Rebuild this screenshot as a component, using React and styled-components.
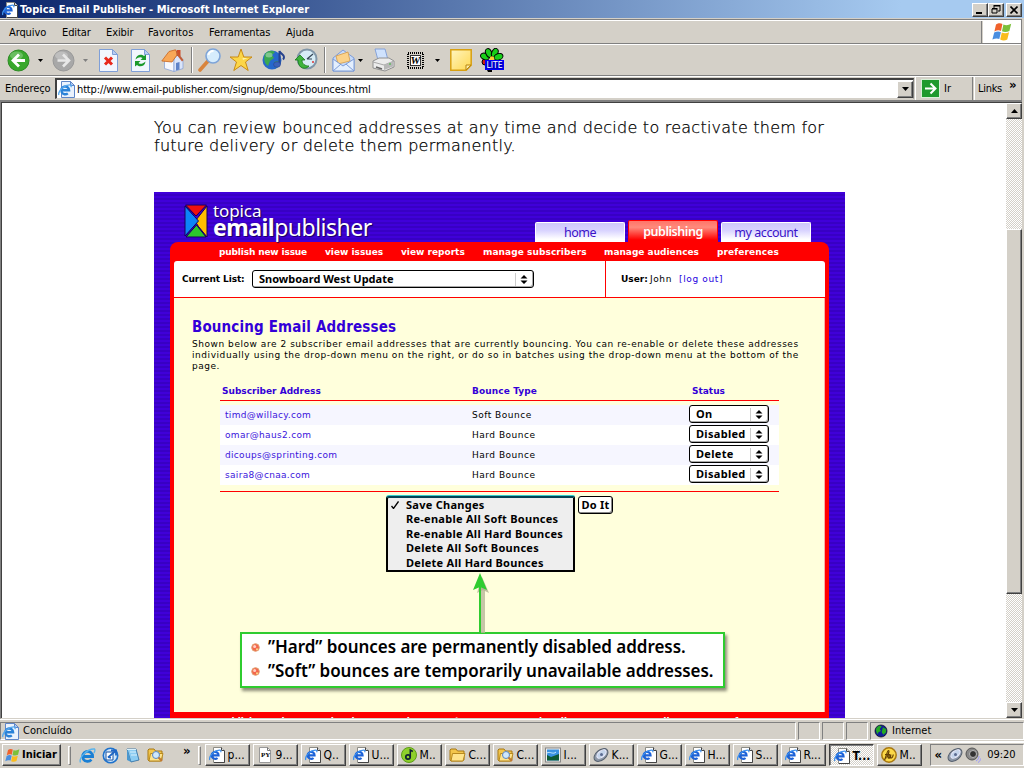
import React from "react";
import styled, { createGlobalStyle, css } from "styled-components";

const FACE = "#d4d0c8";
const tahoma = `"DejaVu Sans Condensed", "DejaVu Sans", sans-serif`;
const verdana = `"DejaVu Sans", sans-serif`;
const humanist = `"Noto Sans", "Open Sans", sans-serif`;

const Global = createGlobalStyle`
  * { box-sizing: border-box; }
  body { margin: 0; background: ${FACE}; overflow: hidden; }
  svg { display: block; flex: none; }
`;

const raised = css`
  border: 1px solid;
  border-color: #fff #404040 #404040 #fff;
  box-shadow: inset -1px -1px 0 #808080;
  background: ${FACE};
`;

const Screen = styled.div`
  width: 1024px;
  height: 768px;
  display: flex;
  flex-direction: column;
  background: ${FACE};
  font: 11px/14px ${tahoma};
  color: #000;
  white-space: nowrap;
  overflow: hidden;
`;

const Label = styled.span`
  flex: none;
  display: block;
  white-space: nowrap;
  letter-spacing: ${(p) => p.$ls || 0}px;
  width: ${(p) => (p.$w ? p.$w + "px" : "auto")};
`;

/* ---------- window chrome ---------- */
const TitleBar = styled.header`
  height: 18px;
  flex: none;
  display: flex;
  align-items: center;
  padding: 1px 2px 0 2px;
  gap: 2px;
  background: linear-gradient(90deg, #0a246a, #a6caf0 88%);
  color: #fff;
  font-weight: bold;
`;
const Spacer = styled.div`
  flex: 1;
`;
const WinButton = styled.span`
  ${raised}
  width: 16px;
  height: 14px;
  margin-left: ${(p) => p.$gap || 0}px;
  display: flex;
  align-items: center;
  justify-content: center;
`;
const WinButtons = styled.div`
  display: flex;
`;
const Bars = styled.div`
  flex: none;
  height: 83px;
  margin-right: 2px;
  margin-top: 1px;
  border-top: 1px solid #808080;
  border-right: 1px solid #808080;
`;
const MenuBar = styled.nav`
  height: 24px;
  display: flex;
  border-top: 1px solid #fff;
  border-bottom: 1px solid #808080;
`;
const MenuItem = styled.span`
  width: ${(p) => p.$w}px;
  line-height: 23px;
  letter-spacing: ${(p) => p.$ls || 0}px;
`;
const MenuItems = styled.div`
  flex: 1;
  display: flex;
  padding-left: 9px;
  border-right: 1px solid #808080;
`;
const FlagBox = styled.div`
  width: 38px;
  margin-left: 1px;
  background: #fff;
  display: flex;
  align-items: center;
  justify-content: center;
`;
const ToolBar = styled.div`
  height: 32px;
  display: flex;
  align-items: center;
  border-top: 1px solid #fff;
  border-bottom: 1px solid #808080;
  padding-left: 7px;
`;
const Tool = styled.span`
  margin-left: ${(p) => p.$m || 0}px;
`;
const ToolSep = styled.span`
  width: 2px;
  height: 26px;
  margin-left: ${(p) => p.$m}px;
  border-left: 1px solid #808080;
  border-right: 1px solid #fff;
`;
const AddressBar = styled.div`
  height: 25px;
  display: flex;
  align-items: stretch;
  border-top: 1px solid #fff;
  border-bottom: 1px solid #808080;
  padding-left: 5px;
  line-height: 23px;
`;
const AddressField = styled.div`
  width: 859px;
  height: 21px;
  margin-top: 1px;
  display: flex;
  align-items: center;
  background: #fff;
  border: 1px solid;
  border-width: 2px 1px 1px 2px;
  border-color: #404040 #808080 #d4d0c8 #404040;
  padding-left: 1px;
`;
const DropButton = styled.span`
  ${raised}
  width: 16px;
  height: 17px;
  display: flex;
  align-items: center;
  justify-content: center;
`;
const GoGroup = styled.div`
  display: flex;
  align-items: center;
  width: 58px;
  margin-left: 1px;
  padding-left: 5px;
  gap: 4px;
  border-left: 1px solid #fff;
  border-right: 1px solid #808080;
`;
const LinksGroup = styled.div`
  display: flex;
  flex: 1;
  margin-left: 1px;
  padding-left: 3px;
  border-left: 1px solid #fff;
`;
const Chevron = styled.span`
  font-weight: bold;
  font-size: 13px;
  line-height: ${(p) => p.$lh || 14}px;
`;

/* ---------- viewport ---------- */
const Viewport = styled.main`
  flex: none;
  height: 618px;
  margin: -1px 2px 0 0;
  display: flex;
  border-top: 1px solid #808080;
  border-left: 1px solid #808080;
  border-bottom: 1px solid ${FACE};
  background: #fff;
`;
const Page = styled.div`
  flex: 1;
  overflow: hidden;
  padding: 16px 0 0 152px;
  border-top: 1px solid #404040;
  border-left: 1px solid #404040;
`;
const Intro = styled.p`
  margin: 0 0 37px;
  height: 36px;
  font: 200 16px/18px ${verdana};
  -webkit-text-stroke: 0.25px #000;
  letter-spacing: 0.245px;
`;
const ScrollBar = styled.div`
  width: 16px;
  display: flex;
  flex-direction: column;
  border-top: 1px solid #404040;
  background: repeating-conic-gradient(#fff 0 25%, ${FACE} 0 50%) 0 0 / 2px 2px;
`;
const ScrollButton = styled.div`
  ${raised}
  height: 16px;
  display: flex;
  align-items: center;
  justify-content: center;
`;
const Thumb = styled.div`
  ${raised}
  height: 365px;
  margin: 110px 0 108px;
`;

/* ---------- publisher screen ---------- */
const Publisher = styled.section`
  width: 691px;
  height: 540px;
  padding: 0 16px;
  background: repeating-linear-gradient(#4000d9 0 2px, #3800c4 2px 4px);
`;
const Header = styled.div`
  height: 50px;
  display: flex;
  padding-left: 14px;
`;
const Brand = styled.div`
  width: 351px;
  display: flex;
  gap: 5px;
  padding-top: 12px;
  color: #fff;
  font-family: ${humanist};
  text-shadow: 1px 1px 1px #14005c;
`;
const BrandTop = styled.div`
  font-size: 17px;
  line-height: 14px;
  letter-spacing: -0.1px;
`;
const BrandBottom = styled.div`
  font-size: 23px;
  line-height: 18px;
  letter-spacing: -0.5px;
`;
const Tabs = styled.div`
  display: flex;
  align-items: flex-end;
  gap: 3px;
`;
const Tab = styled.span`
  width: 90px;
  height: ${(p) => (p.$on ? 22 : 20)}px;
  border-radius: 2px 2px 0 0;
  text-align: center;
  font: ${(p) => (p.$on ? 600 : 400)} 12.5px/${(p) => (p.$on ? 22 : 19)}px ${humanist};
  letter-spacing: -0.45px;
  color: ${(p) => (p.$on ? "#fff" : "#3a12c8")};
  border: ${(p) => (p.$on ? "1px solid #f00" : "1px solid #fff")};
  border-bottom: 0;
  background: ${(p) =>
    p.$on
      ? "linear-gradient(#ff7468, #ff8a7c 30%, #f00 90%)"
      : "linear-gradient(#cfc8fb, #d9d4ff 40%, #fff 85%)"};
`;
const Red = styled.div`
  height: 490px;
  width: 659px;
  background: #f00;
  border-radius: 8px 8px 0 0;
  padding: 0 4px;
`;
const SubNav = styled.nav`
  display: flex;
  height: 19px;
  padding-left: 45px;
  font: bold 9px/21px ${verdana};
  color: #fff;
`;
const SubItem = styled.span`
  width: ${(p) => p.$w}px;
  letter-spacing: ${(p) => p.$ls || 0}px;
`;
const ListBar = styled.div`
  height: 37px;
  display: flex;
  background: #fff;
  border-bottom: 1px solid #f00;
  border-radius: 3px 3px 0 0;
  font: 9px/37px ${verdana};
`;
const ListPart = styled.div`
  width: 432px;
  display: flex;
  align-items: center;
  padding-left: 8px;
  border-right: 1px solid #f00;
  font-weight: bold;
`;
const UserPart = styled.div`
  flex: 1;
  padding-left: 15px;
  display: flex;
`;
const Link = styled.span`
  color: #2400e0;
  letter-spacing: 0.65px;
`;
const Select = styled.span`
  width: ${(p) => p.$w}px;
  height: 18px;
  display: flex;
  align-items: center;
  justify-content: space-between;
  padding: 0 5px 0 6px;
  border: 1px solid #000;
  border-radius: 3px;
  box-shadow: inset -1px -1px 0 #aaa;
  background: #fff;
  font: 700 11px/14px ${humanist};
  letter-spacing: ${(p) => p.$ls || 0}px;
  color: #000;
`;
const Knob = styled.span`
  border-left: 1px solid #ccc;
  height: 13px;
  padding: 2px 0 0 4px;
`;
const Sheet = styled.div`
  height: 414px;
  background: #ffffdc;
  border-right: 1px solid #ffb0a0;
  padding: 20px 0 0 18px;
`;
const Title = styled.h1`
  margin: 0;
  font: bold 15px/18px ${tahoma};
  letter-spacing: 0.15px;
  color: #3300d8;
`;
const Desc = styled.p`
  margin: 3px 0 0;
  height: 33px;
  font: 9px/11px ${verdana};
`;
const Table = styled.div`
  width: 559px;
  margin: 12px 0 0 28px;
  font: 9px/20px ${verdana};
`;
const HeadRow = styled.div`
  display: flex;
  height: 17px;
  line-height: 13px;
  padding: 1px 0 0 2px;
  border-bottom: 1px solid #f00;
  margin-bottom: 4px;
  color: #3300d8;
  font-weight: bold;
`;
const Row = styled.div`
  display: flex;
  height: 20px;
  padding-left: 5px;
  background: ${(p) => (p.$alt ? "#f6f6ff" : "#fff")};
`;
const Cell = styled.span`
  width: ${(p) => p.$w}px;
  letter-spacing: ${(p) => p.$ls || 0}px;
  color: ${(p) => (p.$link ? "#3a14dc" : "inherit")};
`;
const Rule = styled.div`
  height: 1px;
  margin-top: 6px;
  background: #f00;
`;
const BatchRow = styled.div`
  display: flex;
  align-items: flex-start;
  padding: 4px 0 0 194px;
  gap: 3px;
`;
const Menu = styled.div`
  width: 189px;
  height: 76px;
  padding: 0 0 0 3px;
  border: 2px solid #000;
  border-top-color: #045;
  border-radius: 3px 2px 1px 1px;
  box-shadow: 0 -1px 0 #3cc;
  background: #eee;
  font: 700 11px/14.4px ${humanist};
`;
const MenuLine = styled.div`
  display: flex;
  align-items: center;
  height: 14.4px;
  letter-spacing: 0.27px;
`;
const Mark = styled.span`
  width: 15px;
`;
const DoIt = styled.span`
  width: 35px;
  height: 18px;
  border: 1px solid #000;
  border-radius: 3px;
  box-shadow: inset -1px -1px 0 #888;
  background: #fff;
  text-align: center;
  font: 700 11px/16px ${humanist};
  letter-spacing: 0.2px;
`;
const ArrowWrap = styled.div`
  padding-left: 280px;
  margin-top: 1px;
  height: 59px;
`;
const Callout = styled.div`
  width: 485px;
  height: 56px;
  margin-left: 48px;
  padding: 1px 0 0 9px;
  background: #fff;
  border: 2px solid #2fcc2f;
  box-shadow: 2px 3px 3px #8c8c78;
  font: 600 17px/24px ${humanist};
`;
const Point = styled.div`
  display: flex;
  align-items: center;
  gap: 8px;
  height: 24px;
  letter-spacing: -0.04px;
`;
const Footer = styled.div`
  margin-top: -1px;
`;

/* ---------- status and task bars ---------- */
const StatusBar = styled.div`
  flex: none;
  height: 23px;
  border-top: 1px solid #fff;
  border-bottom: 1px solid #fff;
  padding: 2px 0 1px;
  display: flex;
  gap: 2px;
`;
const StatusPane = styled.div`
  width: ${(p) => p.$w}px;
  display: flex;
  align-items: center;
  gap: 4px;
  padding-left: ${(p) => p.$pl || 0}px;
  border: 1px solid;
  border-color: #808080 #fff #fff #808080;
`;
const TaskBar = styled.footer`
  flex: 1;
  border-top: 1px solid #fff;
  display: flex;
  padding: 1px 0 0 2px;
`;
const Start = styled.span`
  ${raised}
  width: 59px;
  height: 22px;
  display: flex;
  align-items: center;
  padding-left: 2px;
  gap: 2px;
  font-weight: bold;
`;
const Grip = styled.span`
  width: 3px;
  height: 19px;
  margin: 2px 0 0 ${(p) => p.$m}px;
  border: 1px solid;
  border-color: #fff #808080 #808080 #fff;
`;
const Quick = styled.div`
  display: flex;
  align-items: center;
  height: 22px;
  gap: 6px;
  width: 112px;
  padding-left: 8px;
`;
const Tasks = styled.div`
  display: flex;
  gap: 3px;
  margin-left: 4px;
`;
const Task = styled.span`
  ${raised}
  width: 45px;
  height: 22px;
  display: flex;
  align-items: center;
  gap: 3px;
  padding-left: 3px;
  font-size: 12px;
  ${(p) =>
    p.$on &&
    css`
      font-weight: bold;
      border-color: #404040 #fff #fff #404040;
      box-shadow: inset 1px 1px 0 #808080;
      background: repeating-conic-gradient(#fff 0 25%, ${FACE} 0 50%) 0 0 / 2px 2px;
      padding-top: 1px;
      padding-left: 4px;
    `}
`;
const Tray = styled.div`
  width: 94px;
  height: 22px;
  margin-left: 8px;
  display: flex;
  align-items: center;
  padding-left: 4px;
  border: 1px solid;
  border-color: #808080 #fff #fff #808080;
`;

/* ---------- icons ---------- */
const Svg = ({ s = 16, w, h, children }) => (
  <svg width={w || s} height={h || s} viewBox={`0 0 ${w || s} ${h || s}`}>
    {children}
  </svg>
);
const Tri = ({ up, c = "#000", small }) => (
  <svg width={small ? 5 : 7} height={small ? 3 : 4} viewBox="0 0 7 4">
    <path d={up ? "M0 4L3.5 0 7 4z" : "M0 0h7L3.5 4z"} fill={c} />
  </svg>
);
const IePage = () => (
  <Svg>
    <path d="M4.5.5h8l3 3v12h-11z" fill="#fff" stroke="#8d8d86" />
    <path d="M12.5.5v3h3" fill="#ddd" stroke="#444" />
    <path d="M15.5 4v11.5H5" fill="none" stroke="#444" />
    <path d="M2.6 8.400h7a3.500 3.500 0 1 0-1.100 2.500" fill="none" stroke="#1c62d8" strokeWidth="2.100" />
    <path d="M.8 13C-.6 9 6 2.500 11.600 3.300c.6.600.3 1.400 0 2" fill="none" stroke="#3c90ee" strokeWidth="1.200" />
  </Svg>
);
const IePageSmooth = () => (
  <Svg s={17}>
    <path d="M3.500.5h9l4 4v12h-13z" fill="#eaf2fd" stroke="#5f86c8" />
    <path d="M12.500.5v4h4z" fill="#b9cdf2" stroke="#5f86c8" />
    <path d="M3.500 9.300h7.600a3.900 3.900 0 1 0-1.300 3" fill="none" stroke="#2a82d8" strokeWidth="2.400" />
    <path d="M.9 14C-.4 10 7 3 13 4c.6.800.2 1.600-.2 2.200" fill="none" stroke="#56a8ee" strokeWidth="1.300" />
  </Svg>
);
const IeLogo = () => (
  <Svg s={17}>
    <path d="M4 9.5h9.6a5 5 0 1 0-1.200 3.200" fill="none" stroke="#1a7fd4" strokeWidth="2.800" />
    <path d="M1.500 15.500C-.5 11 8 1.500 15.500 2c1 1 0 3-.5 4" fill="none" stroke="#58b4ee" strokeWidth="1.400" />
  </Svg>
);
const Flag = ({ s = 20 }) => (
  <svg width={s} height={s} viewBox="0 0 20 20">
    <path d="M4 2.500C6.500 .8 8.500 1 10.400 2L9 9C7 8 5 8.200 2.400 9.500z" fill="#f0622c" />
    <path d="M11.400 2.500C14 3.700 16.500 3.300 19.200 1.800L17.400 9C15 10.200 12.500 10.400 10 9.300z" fill="#7cc03a" />
    <path d="M2.200 10.500C5 9.200 7 9.200 8.900 10.200L7.300 17C5.500 16 3 16.200.4 17.600z" fill="#4a8ee0" />
    <path d="M9.800 10.500C12 11.500 14.500 11.500 17.100 10.200L15.300 17.400C12.800 18.800 10.500 18.600 8.200 17.500z" fill="#fabc1c" />
  </svg>
);
const Round = ({ c, d, e }) => (
  <Svg s={23}>
    <circle cx="11.500" cy="11.500" r="10.500" fill={c} stroke={d} />
    <ellipse cx="9.500" cy="6.500" rx="6.500" ry="4" fill="#fff" opacity=".25" />
    {e ? (
      <path d="M5.500 11.500h11M11 5.500l6 6-6 6" fill="none" stroke="#e8e8e8" strokeWidth="2.600" />
    ) : (
      <path d="M18 11.500H6.500M12 5.500l-6 6 6 6" fill="none" stroke="#fff" strokeWidth="2.800" />
    )}
  </Svg>
);
const Sheet20 = ({ children }) => (
  <Svg w={19} h={23}>
    <path d="M.5.500h13l5 5v17h-18z" fill="#f2f6fe" stroke="#7f9fd8" />
    <path d="M13.500.5v5h5z" fill="#b9cdf2" stroke="#7f9fd8" />
    {children}
  </Svg>
);
const Home = () => (
  <Svg s={23}>
    <path d="M3.500 11v8.500l9.500 3V10l-4-4z" fill="#f7f8fd" stroke="#8aa3d8" strokeWidth=".8" />
    <path d="M13 22.500V10l4.500-5 4.500 6v8.500z" fill="#dbe5fa" stroke="#8aa3d8" strokeWidth=".8" />
    <path d="M16 1h3.500v6H16z" fill="#d24e28" />
    <path d="M.8 12L8 2.500 14.500.8 17 4.500 11 13z" fill="#f8a858" stroke="#c8641e" strokeWidth=".8" />
    <path d="M14.500.8L22.500 11l-1.500 1.500-5.500-7z" fill="#c25c34" />
    <path d="M15 14l3.500-1v7.500l-3.500 1z" fill="#5e82c8" />
  </Svg>
);
const Search = () => (
  <Svg s={24}>
    <path d="M2 22L10 13" stroke="#d9843c" strokeWidth="3.600" strokeLinecap="round" />
    <circle cx="15" cy="8" r="7" fill="#d6ecfc" stroke="#7ea4d8" strokeWidth="1.600" />
    <path d="M10.500 7a4.800 4.800 0 0 1 5-4" stroke="#fff" strokeWidth="2" fill="none" />
  </Svg>
);
const Star = () => (
  <Svg s={24}>
    <path d="M12 1l2.800 8H23l-6.500 5 2.700 8.500L12 17.500 4.800 22.500 7.500 14 1 9h8.200z" fill="#fcd648" stroke="#c98a14" />
    <path d="M12 4l1.500 6h5L14 12z" fill="#fff2a8" />
  </Svg>
);
const Media = () => (
  <Svg s={24}>
    <circle cx="10" cy="12" r="9.500" fill="#2668cc" />
    <path d="M3 6c3-4 7-4 10-2l-3 3 2 3-4 3-2 5c-3-2-5-7-3-12z" fill="#3aa850" />
    <path d="M12 14l4-1 1 3-3 4z" fill="#45b052" />
    <ellipse cx="7" cy="7" rx="3.500" ry="2.500" fill="#fff" opacity=".35" />
    <path d="M17.500 16V3c.5 3 4.500 3 4.500 6 0 1.500-1 2.500-1 2.500" fill="none" stroke="#27428e" strokeWidth="2" />
    <ellipse cx="15" cy="16.500" rx="3.400" ry="2.800" fill="#3c62b8" stroke="#27428e" strokeWidth=".6" />
  </Svg>
);
const History = () => (
  <Svg s={24}>
    <circle cx="13" cy="11" r="9.500" fill="#d6ecf6" stroke="#8096a8" strokeWidth="2" />
    <path d="M13 11l6-5M13 11h5" stroke="#345" strokeWidth="1.200" />
    <path d="M1 12l5-5 5 5H8c0 4 3 6 7 6-3 4-11 3-11-6z" fill="#3eb43e" stroke="#167a1a" strokeWidth=".8" />
    <circle cx="19" cy="14" r="1" fill="#d33" />
  </Svg>
);
const Mail = () => (
  <Svg s={23}>
    <path d="M1 9L11 1l11 8v13H1z" fill="#c5dafa" stroke="#7d9cd8" />
    <path d="M4 7l12-4 2 9-12 3z" fill="#fbd28a" stroke="#d49a48" strokeWidth=".8" />
    <path d="M1 10l10 7 11-7v12H1z" fill="#e4effe" stroke="#7d9cd8" />
    <path d="M1 22l8-7M22 22l-8-7" stroke="#7d9cd8" />
  </Svg>
);
const Printer = () => (
  <Svg s={24}>
    <path d="M4 1h10l3 11H7z" fill="#cfe2fd" stroke="#7d9cd8" strokeWidth=".9" />
    <path d="M2 13l6-3h10l5 3v6l-9 4-12-3z" fill="#ececec" stroke="#909090" />
    <path d="M2 14l11 3 10-4" fill="none" stroke="#a8a8a8" />
    <path d="M13 17v5l9-3.500v-5z" fill="#b8b8b8" />
    <path d="M5 19l6 2" stroke="#666" strokeWidth="1.500" />
    <path d="M18 16h2" stroke="#3b3" />
  </Svg>
);
const WordText = styled.text`
  font: italic bold 11px "Liberation Serif", serif;
`;
const Word = () => (
  <Svg w={17} h={17}>
    <rect x="1" y="1" width="15" height="15" fill="#d4d0c8" stroke="#000" strokeWidth="2" strokeDasharray="1 1" />
    <rect x="3.500" y="3.500" width="10" height="10" fill="#fff" stroke="#333" />
    <WordText x="3.500" y="12.300" textLength="10">W</WordText>
  </Svg>
);
const Note = () => (
  <Svg w={22} h={22}>
    <defs>
      <linearGradient id="note" x1="0" y1="0" x2="1" y2="1">
        <stop offset="0" stopColor="#fff5c0" />
        <stop offset="1" stopColor="#ffd850" />
      </linearGradient>
    </defs>
    <path d="M.8.800h20.400v15.400l-5 5H.8z" fill="url(#note)" stroke="#d8a012" strokeWidth="1.500" />
    <path d="M16 21v-5h5z" fill="#fff0a8" stroke="#b88410" />
  </Svg>
);
const LiteText = styled.text`
  font: 8.500px "DejaVu Sans Condensed", sans-serif;
  fill: #fff;
`;
const Lite = () => (
  <Svg w={24} h={24}>
    <circle cx="5" cy="14" r="3" fill="#d01818" stroke="#000" />
    <g fill="#18d018" stroke="#000" strokeWidth="1">
      <ellipse cx="5" cy="8.500" rx="4.600" ry="3.200" transform="rotate(20 5 8.500)" />
      <ellipse cx="8.800" cy="5" rx="3" ry="4.600" transform="rotate(-25 8.800 5)" />
      <ellipse cx="14.800" cy="4.800" rx="3" ry="4.600" transform="rotate(25 14.800 4.800)" />
      <ellipse cx="18.500" cy="8.800" rx="4.600" ry="3.200" transform="rotate(-20 18.500 8.800)" />
    </g>
    <circle cx="12" cy="10.500" r="2.200" fill="#fc3" />
    <path d="M7 22h5v2H8z" />
    <rect x="5.500" y="12.500" width="18" height="9" fill="#00c" stroke="#00f" />
    <LiteText x="6.500" y="20.300" textLength="16">LITE</LiteText>
  </Svg>
);
const GoIcon = () => (
  <Svg w={19} h={19}>
    <rect x=".5" y=".5" width="18" height="18" fill="#1f9a2e" stroke="#d8f0d8" />
    <path d="M4 9.500h10M9.500 4.500l5 5-5 5" fill="none" stroke="#fff" strokeWidth="2" />
  </Svg>
);
const Earth = () => (
  <svg width="14" height="14" viewBox="0 0 20 22">
    <circle cx="10" cy="11" r="9.500" fill="#101c98" stroke="#000" />
    <path d="M3 6c3-4 7-4 8-2l-3 4 2 3-4 2-1 3C3 14 1 10 3 6zM13 5l5 3v5l-4 4-3-4z" fill="#2a2" />
  </svg>
);
const Folder = ({ find }) => (
  <Svg w={17} h={16}>
    <path d="M1 3l1-1h5l1.500 2H15v9l-2 1H2l-1-1z" fill="#f3c64c" stroke="#a87814" />
    <path d="M3.500 6.500H16l-2 7.500H2z" fill="#ffe48c" stroke="#b88a20" />
    {find && (
      <>
        <circle cx="9" cy="8" r="3.500" fill="#cfe8fc" stroke="#5a86c0" />
        <path d="M11.500 10.500L15 14" stroke="#c07830" strokeWidth="2" />
      </>
    )}
  </Svg>
);
const Notepad = () => (
  <Svg>
    <path d="M2 2h9l3 11-8 2z" fill="#8cccf2" stroke="#2a6aa0" strokeWidth=".8" />
    <path d="M2 2v11l4 2z" fill="#4a98d0" />
    <path d="M2 2.500h9M5 5h6M6 8h6" stroke="#d8f0fc" />
  </Svg>
);
const Outlook = () => (
  <Svg s={17}>
    <circle cx="8.500" cy="8.500" r="7.200" fill="#cfe6fb" stroke="#1e72cc" strokeWidth="1.600" />
    <path d="M4 5h7v8H4z" fill="#fff" stroke="#1450a0" />
    <path d="M6 10.500L13.500 4M14 8.500V3.500H9" stroke="#1e66c4" strokeWidth="1.800" fill="none" />
    <path d="M6 10l3 1" stroke="#1e66c4" strokeWidth="1.500" />
  </Svg>
);
const PyText = styled.text`
  font: bold 7px "Liberation Serif", serif;
`;
const Py = () => (
  <Svg>
    <path d="M2.500.5h8l3 3v12h-11z" fill="#fff" stroke="#999" />
    <path d="M10.500.5v3h3" fill="none" stroke="#777" />
    <PyText x="4" y="10">PY</PyText>
  </Svg>
);
const Music = () => (
  <Svg>
    <circle cx="8" cy="8" r="7.500" fill="#8ed02c" stroke="#5c9c18" />
    <circle cx="7" cy="10" r="2.200" fill="none" stroke="#123" strokeWidth="1.700" />
    <path d="M9.300 10V3l2.500 1.500" fill="none" stroke="#123" strokeWidth="1.500" />
  </Svg>
);
const Picture = () => (
  <Svg>
    <rect x=".5" y="1" width="15" height="14" fill="#f0f0f0" stroke="#888" />
    <path d="M2 2.500h12v11H2z" fill="#3a92e0" />
    <path d="M2 8l4 2 8-3v6.500H2z" fill="#0e5a34" />
    <path d="M2 6c3-2 6 2 9-1" stroke="#cef" fill="none" />
  </Svg>
);
const Disk = () => (
  <Svg>
    <ellipse cx="8" cy="8" rx="8" ry="5" transform="rotate(-40 8 8)" fill="#8d98a8" stroke="#56606e" />
    <ellipse cx="8.500" cy="7" rx="5.500" ry="3" transform="rotate(-40 8.500 7)" fill="#c4d4ea" stroke="#eef" />
    <circle cx="8.500" cy="7.500" r="1.500" fill="#5a6a90" />
  </Svg>
);
const Gold = () => (
  <Svg>
    <circle cx="8" cy="8" r="7.200" fill="#fcd848" stroke="#a87810" strokeWidth="1.500" />
    <path d="M3.500 13C5 11 6 3.500 7.500 3.500S6 11 5.500 11M4 7.500h4.500L7.500 11c1 .8 2-.5 2.300-3.500-.3 3-.3 3.700.5 3.500 1 0 1.700-2 2-3.500" fill="none" stroke="#653f04" strokeWidth="1.200" />
  </Svg>
);
const Speaker = () => (
  <Svg>
    <circle cx="7" cy="7" r="6" fill="#888" stroke="#555" />
    <circle cx="8" cy="7" r="3.500" fill="#333" stroke="#bbb" />
    <path d="M11 14c2-1 3-3 3-5M13 15.500c2-1 2.500-3 2.500-4" stroke="#99f" fill="none" />
  </Svg>
);
const Logo = () => (
  <Svg w={24} h={34}>
    <path d="M1.500 1h21L12 12z" fill="#f01010" stroke="#14005c" />
    <path d="M23 2v31L14.500 22.500 11 17l3-3.500z" fill="#ffbe00" stroke="#14005c" />
    <path d="M1 2l9.500 10.500L14.500 17 1 32z" fill="#0c84f8" stroke="#14005c" />
    <path d="M2 33L12.500 21 22 33z" fill="#2cc82c" stroke="#14005c" />
  </Svg>
);
const UpDown = () => (
  <Svg w={8} h={9}>
    <path d="M.5 3.500L4 0l3.500 3.500zM.5 5.500h7L4 9z" />
  </Svg>
);
const Bullet = () => (
  <Svg w={9} h={9}>
    <circle cx="4.500" cy="4.500" r="3.800" fill="#f4664c" stroke="#e0a070" />
    <circle cx="3.600" cy="3.600" r="1.500" fill="#ffd0c4" />
    <circle cx="6" cy="6.300" r="1" fill="#fce08a" />
  </Svg>
);
const Arrow = () => (
  <Svg w={20} h={60}>
    <path d="M9 14v46h4V14z" fill="#b8b898" opacity=".8" />
    <path d="M10 4l7 16-6-3-6 3z" fill="#b0b090" opacity=".8" />
    <path d="M7 14v46h2V14z" fill="#2fcc2f" />
    <path d="M8 0l7 17-7-3-7 3z" fill="#2fcc2f" />
  </Svg>
);

/* ---------- data ---------- */
const menus = [["Arquivo", 53, -0.1], ["Editar", 44, -0.1], ["Exibir", 42, -0.1], ["Favoritos", 61, 0.1], ["Ferramentas", 77, -0.1], ["Ajuda", 40, 0]];
const nav = [["publish new issue", 106, -0.15], ["view issues", 76, 0], ["view reports", 82, 0], ["manage subscribers", 121, 0.07], ["manage audiences", 113, 0], ["preferences", 70, 0.1]];
const rows = [
  ["timd@willacy.com", "Soft Bounce", "On"],
  ["omar@haus2.com", "Hard Bounce", "Disabled"],
  ["dicoups@sprinting.com", "Hard Bounce", "Delete"],
  ["saira8@cnaa.com", "Hard Bounce", "Disabled"],
];
const batch = ["Save Changes", "Re-enable All Soft Bounces", "Re-enable All Hard Bounces", "Delete All Soft Bounces", "Delete All Hard Bounces"];
const tasks = [[IePage, "p..."], [Py, "9..."], [IePage, "Q.."], [IePage, "U..."], [Music, "M.."], [Folder, "C..."], [() => <Folder find />, "C..."], [Picture, "I..."], [Disk, "K..."], [IePage, "G..."], [IePage, "H..."], [IePage, "S..."], [IePage, "R..."], [IePage, "T...", true], [Gold, "M.."]];

const NavItems = () => nav.map(([t, w, ls]) => <SubItem key={t} $w={w} $ls={ls}>{t}</SubItem>);

export default function App() {
  return (
    <Screen>
      <Global />
      <TitleBar>
        <IePage />
        <Label $ls={0.02}>Topica Email Publisher - Microsoft Internet Explorer</Label>
        <Spacer />
        <WinButtons>
          <WinButton><Svg w={8} h={8}><path d="M0 6h6v2H0z" /></Svg></WinButton>
          <WinButton><Svg w={10} h={9}><path d="M3 1h6v5H7M3 0v3M3 .5h6.500M1 4h5v4H1zM1 3.500h5.500" fill="none" stroke="#000" /></Svg></WinButton>
          <WinButton $gap={2}><Svg w={8} h={8}><path d="M.5.500l7 7M7.500.500l-7 7" stroke="#000" strokeWidth="1.600" /></Svg></WinButton>
        </WinButtons>
      </TitleBar>
      <Bars>
        <MenuBar>
          <MenuItems>{menus.map(([t, w, ls]) => <MenuItem key={t} $w={w} $ls={ls}>{t}</MenuItem>)}</MenuItems>
          <FlagBox><Flag /></FlagBox>
        </MenuBar>
        <ToolBar>
          <Tool><Round c="#38a82c" d="#2c8a24" /></Tool>
          <Tool $m={8}><Tri small /></Tool>
          <Tool $m={9}><Round c="#a8a8a8" d="#989898" e /></Tool>
          <Tool $m={8}><Tri small c="#808080" /></Tool>
          <Tool $m={11}><Sheet20><path d="M6 8.500l7 7M13 8.500l-7 7" stroke="#e8281c" strokeWidth="3" /></Sheet20></Tool>
          <Tool $m={13}><Sheet20><path d="M4.500 10.500c.5-5 6-6 8.500-3.500l2-1.500v5.500h-5.500l2-2c-2-1.500-4-1-7 1.500zM14.500 12.500c-.5 5-6 6-8.500 3.500l-2 1.500V12h5.500l-2 2c2 1.500 4 1 7-1.500z" fill="#1c9a2c" /></Sheet20></Tool>
          <Tool $m={11}><Home /></Tool>
          <ToolSep $m={7} />
          <Tool $m={5}><Search /></Tool>
          <Tool $m={7}><Star /></Tool>
          <Tool $m={9}><Media /></Tool>
          <Tool $m={8}><History /></Tool>
          <ToolSep $m={6} />
          <Tool $m={6}><Mail /></Tool>
          <Tool $m={3}><Tri small /></Tool>
          <Tool $m={8}><Printer /></Tool>
          <Tool $m={12}><Word /></Tool>
          <Tool $m={11}><Tri small /></Tool>
          <Tool $m={10}><Note /></Tool>
          <Tool $m={8}><Lite /></Tool>
        </ToolBar>
        <AddressBar>
          <Label $w={50} $ls={-0.1}>Endereço</Label>
          <AddressField>
            <IePageSmooth />
            <Tool $m={2}><Label $ls={-0.14}>http://www.email-publisher.com/signup/demo/5bounces.html</Label></Tool>
            <Spacer />
            <DropButton><Tri /></DropButton>
          </AddressField>
          <GoGroup><GoIcon /><Label>Ir</Label></GoGroup>
          <LinksGroup><Label $w={31} $ls={-0.3}>Links</Label><Chevron $lh={16}>»</Chevron></LinksGroup>
        </AddressBar>
      </Bars>
      <Viewport>
        <Page>
          <Intro>
            You can review bounced addresses at any time and decide to reactivate them for
            <br />
            future delivery or delete them permanently.
          </Intro>
          <Publisher>
            <Header>
              <Brand>
                <Logo />
                <div>
                  <BrandTop>topica</BrandTop>
                  <BrandBottom><b>email</b>publisher</BrandBottom>
                </div>
              </Brand>
              <Tabs>
                <Tab>home</Tab>
                <Tab $on>publishing</Tab>
                <Tab>my account</Tab>
              </Tabs>
            </Header>
            <Red>
              <SubNav><NavItems /></SubNav>
              <ListBar>
                <ListPart>
                  <Label $w={70} $ls={-0.1}>Current List:</Label>
                  <Select $w={282}>Snowboard West Update<Knob><UpDown /></Knob></Select>
                </ListPart>
                <UserPart>
                  <Label $w={29}><b>User:</b></Label>
                  <Label $w={29} $ls={0.6}>John</Label>
                  <Link>[log out]</Link>
                </UserPart>
              </ListBar>
              <Sheet>
                <Title>Bouncing Email Addresses</Title>
                <Desc>
                  <Label $ls={0.545}>Shown below are 2 subscriber email addresses that are currently bouncing. You can re-enable or delete these addresses</Label>
                  <Label $ls={0.56}>individually using the drop-down menu on the right, or do so in batches using the drop-down menu at the bottom of the</Label>
                  <Label $ls={0.5}>page.</Label>
                </Desc>
                <Table>
                  <HeadRow>
                    <Cell $w={250}>Subscriber Address</Cell>
                    <Cell $w={220} $ls={0.1}>Bounce Type</Cell>
                    <Cell>Status</Cell>
                  </HeadRow>
                  {rows.map(([a, b, s], i) => (
                    <Row key={a} $alt={i % 2 === 0}>
                      <Cell $w={247} $link $ls={0.32}>{a}</Cell>
                      <Cell $w={217} $ls={0.5}>{b}</Cell>
                      <Select $w={80} $ls={0.3}>{s}<Knob><UpDown /></Knob></Select>
                    </Row>
                  ))}
                  <Rule />
                </Table>
                <BatchRow>
                  <Menu>
                    {batch.map((t, i) => (
                      <MenuLine key={t}>
                        <Mark>{i === 0 && <Svg w={8} h={8}><path d="M.5 5l2 2.500L7.500.5" fill="none" stroke="#000" strokeWidth="1.300" /></Svg>}</Mark>
                        {t}
                      </MenuLine>
                    ))}
                  </Menu>
                  <DoIt>Do It</DoIt>
                </BatchRow>
                <ArrowWrap><Arrow /></ArrowWrap>
                <Callout>
                  <Point><Bullet />”Hard” bounces are permanently disabled address.</Point>
                  <Point><Bullet />”Soft” bounces are temporarily unavailable addresses.</Point>
                </Callout>
              </Sheet>
              <Footer><SubNav as="div"><NavItems /></SubNav></Footer>
            </Red>
          </Publisher>
        </Page>
        <ScrollBar>
          <ScrollButton><Tri up /></ScrollButton>
          <Thumb />
          <ScrollButton><Tri /></ScrollButton>
        </ScrollBar>
      </Viewport>
      <StatusBar>
        <StatusPane $w={796} $pl={1}><IePageSmooth /><Label>Concluído</Label></StatusPane>
        <StatusPane $w={22} />
        <StatusPane $w={22} />
        <StatusPane $w={22} />
        <StatusPane $w={154} $pl={3}><Earth /><Label>Internet</Label></StatusPane>
      </StatusBar>
      <TaskBar>
        <Start><Flag s={15} /><Label>Iniciar</Label></Start>
        <Grip $m={7} />
        <Quick><IeLogo /><Outlook /><Notepad /><Folder find /></Quick>
        <Chevron $lh={14}>»</Chevron>
        <Grip $m={7} />
        <Tasks>
          {tasks.map(([Icon, t, on], i) => (
            <Task key={i} $on={on}><Icon /><Label>{t}</Label></Task>
          ))}
        </Tasks>
        <Tray>
          <Chevron>«</Chevron>
          <Tool $m={5}><Disk /></Tool>
          <Tool $m={2}><Speaker /></Tool>
          <Tool $m={6}><Label>09:20</Label></Tool>
        </Tray>
      </TaskBar>
    </Screen>
  );
}
